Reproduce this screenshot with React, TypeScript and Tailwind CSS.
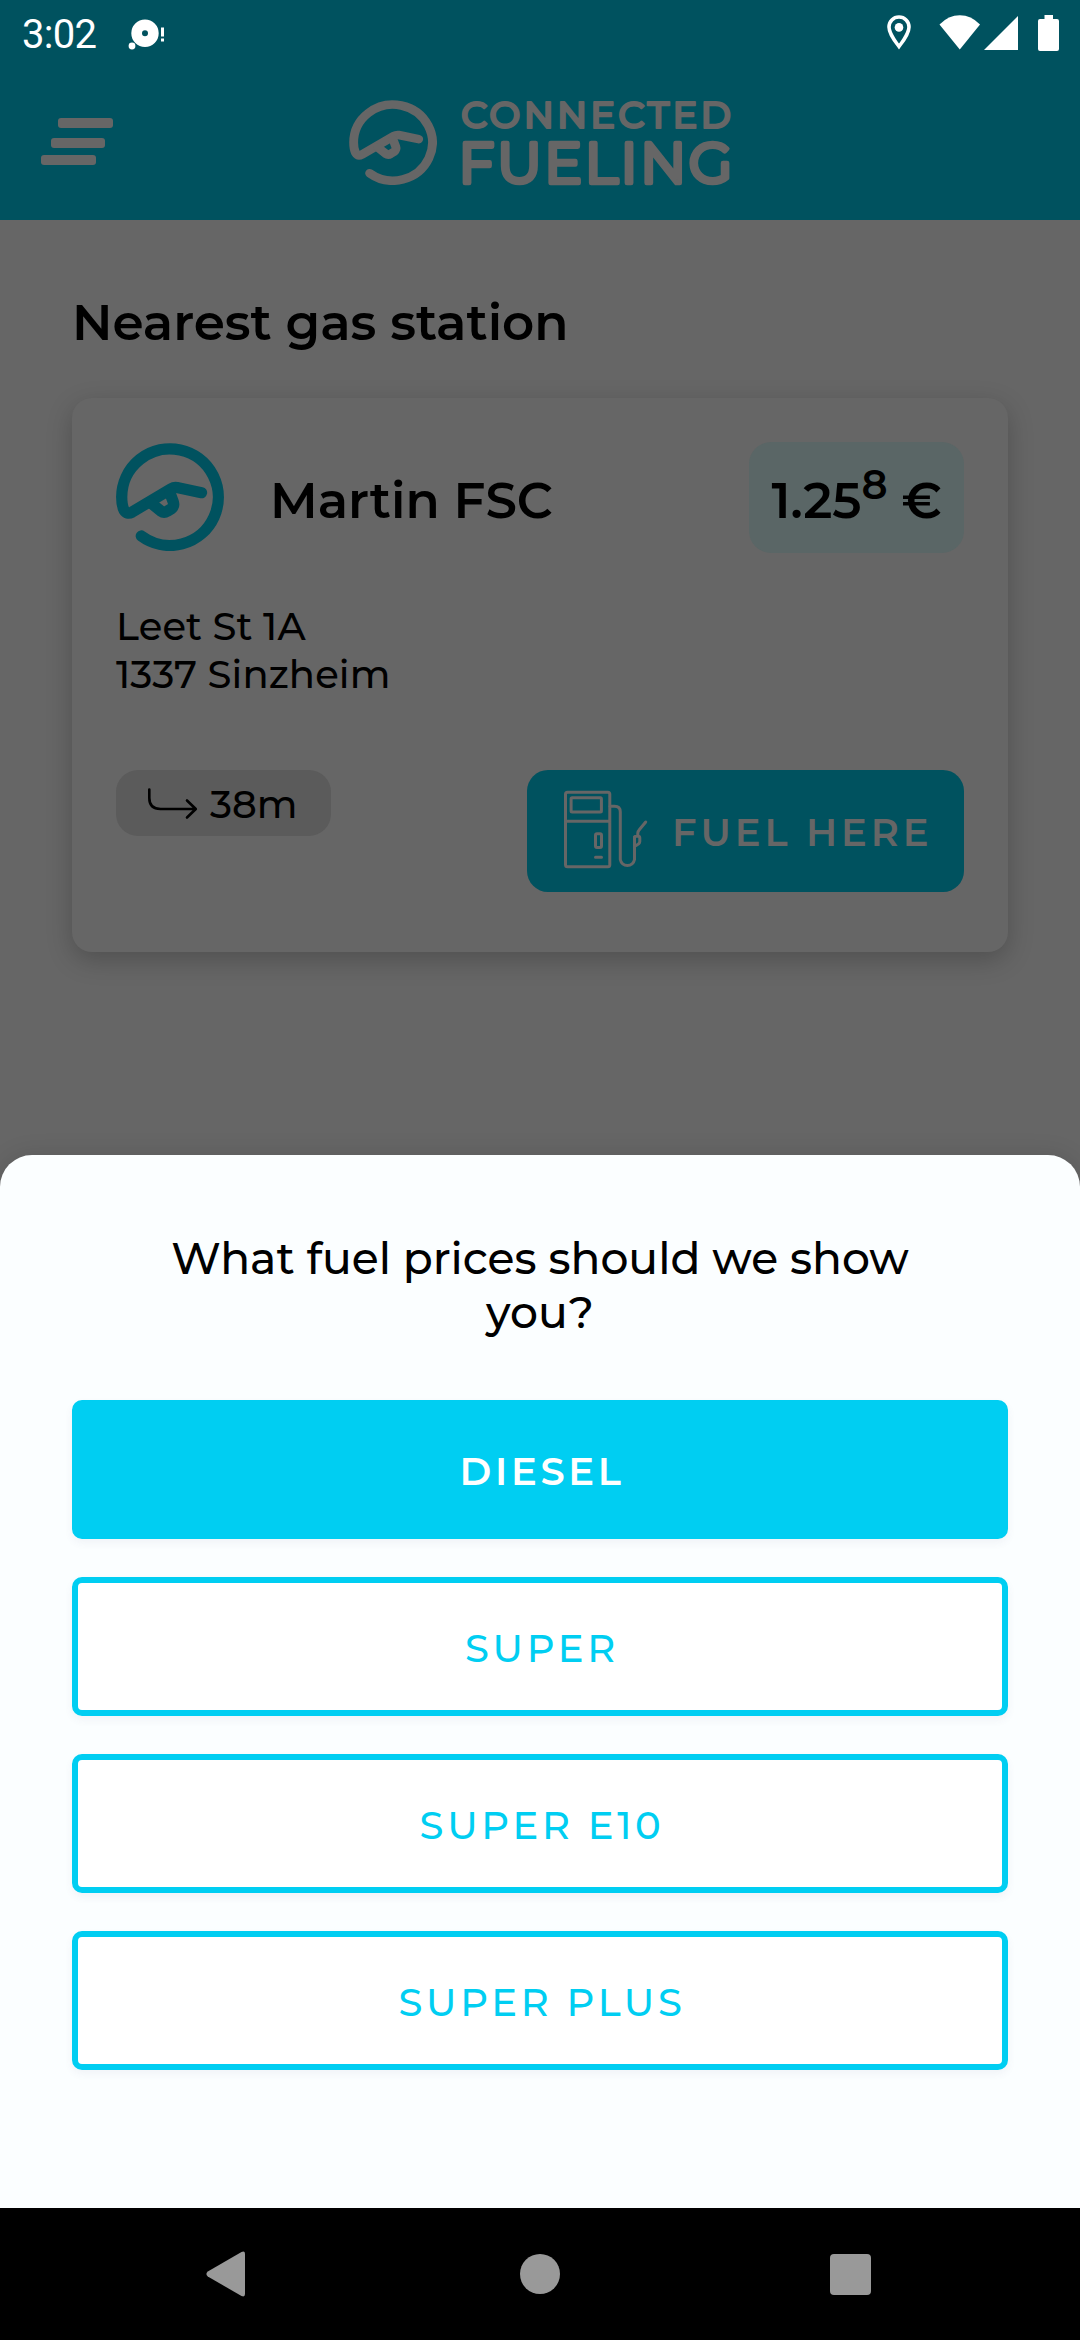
import clsx from "clsx";

function BrandMark({ className, stroke }: { className: string; stroke: number }) {
  return (
    <svg
      viewBox="0 0 108 108"
      preserveAspectRatio="none"
      fill="none"
      stroke="currentColor"
      strokeWidth={stroke}
      strokeLinecap="round"
      strokeLinejoin="round"
      className={className}
    >
      <path d="M25.3 93A48.3 48.3 0 1 0 5.7 54C5.7 60 6.5 64 8 67Q11 72 16 69.2L55 45.8Q58 44 61 44.5L85.5 49.7" />
      <path d="M35 60L45 68.2Q48 70.4 51 68.4L55.5 65.6Q58.6 63 57.3 59L54 50" />
    </svg>
  );
}

function StatusBar() {
  return (
    <div className="flex h-[69px] items-center justify-between pr-[21px] pl-[22px] text-white">
      <div className="flex items-center">
        <span className="w-[106px] font-['Roboto',sans-serif] text-[40px] leading-none tracking-[-0.7px]">3:02</span>
        <svg viewBox="0 0 38 32" className="h-8 w-[38px]" fill="currentColor">
          <path
            fillRule="evenodd"
            d="M17 0.5a13.7 13.7 0 1 1 0 27.4a13.7 13.7 0 1 1 0-27.4M17 11.3a3 3 0 1 0 0 6a3 3 0 1 0 0-6"
          />
          <circle cx="4" cy="27" r="3.4" />
          <path d="M33 8.5h3v9h-3zM33 19.5h3v3h-3z" />
        </svg>
      </div>
      <div className="flex items-center">
        <svg viewBox="0 0 24 35" className="mt-[-4px] mr-7 h-[35px] w-6">
          <path d="M12 2C6.300 2 2 6.400 2 12C2 19 12 31.500 12 31.500S22 19 22 12C22 6.400 17.700 2 12 2Z" fill="none" stroke="currentColor" strokeWidth="3.600" />
          <circle cx="12" cy="12.400" r="4.300" fill="currentColor" />
        </svg>
        <svg viewBox="0 0 42 35" className="mt-[-4px] mr-[3px] h-[35px] w-[42px]" fill="currentColor">
          <path d="M0.500 9.500Q9.500 0.300 20.800 0.300T41 9.500L20.800 34.500Z" />
        </svg>
        <svg viewBox="0 0 34 34" className="mt-[-3px] mr-5 h-[34px] w-[34px]" fill="currentColor">
          <path d="M34 0V34H0Z" />
        </svg>
        <svg viewBox="0 0 21 36" className="mt-[-3px] h-9 w-[21px]" fill="currentColor">
          <path d="M6.500 0h8.500v4h4q2 0 2 2v28q0 2-2 2h-17q-2 0-2-2v-28q0-2 2-2h4.500z" />
        </svg>
      </div>
    </div>
  );
}

function Header() {
  return (
    <header className="h-[220px] bg-[#00525f]">
      <StatusBar />
      <div className="flex items-start pt-[31px] pl-[41px] text-[#666666]">
        <button aria-label="Menu" className="mt-[18px] w-[308px]">
          <span className="ml-[17px] block h-2.5 w-[55px] rounded-[3px] bg-current" />
          <span className="mt-2.5 ml-2.5 block h-2.5 w-[54px] rounded-[3px] bg-current" />
          <span className="mt-[7px] block h-2.5 w-[55px] rounded-[3px] bg-current" />
        </button>
        <BrandMark className="h-[85px] w-[88px]" stroke={10.9} />
        <svg
          viewBox="0 0 270 86"
          className="ml-[24px] h-[86px] w-[270px] overflow-visible font-['Montserrat','Inter',sans-serif]"
          fill="currentColor"
          stroke="currentColor"
          strokeLinejoin="round"
        >
          <text x="0" y="28" fontSize="37" fontWeight="500" strokeWidth="2.200" textLength="270" lengthAdjust="spacing">
            CONNECTED
          </text>
          <text x="-2.500" y="82.500" fontSize="56.500" fontWeight="400" strokeWidth="4.600" textLength="274" lengthAdjust="spacing">
            FUELING
          </text>
        </svg>
      </div>
    </header>
  );
}

function PumpIcon() {
  return (
    <svg viewBox="0 0 84 80" className="mt-[-2px] h-20 w-[84px]" fill="none" stroke="currentColor" strokeWidth="3" strokeLinecap="round" strokeLinejoin="round">
      <rect x="1.500" y="2.200" width="44.300" height="74.500" rx="2" />
      <path d="M2 31.300h43.500M31.500 67.200h6" />
      <rect x="7.100" y="7.800" width="30.300" height="14.300" rx="1" />
      <rect x="31.500" y="43.700" width="6" height="13.800" rx="1.500" />
      <path d="M46 16.300h4.500Q56.300 16.300 56.300 22V69.500a7.200 7.200 0 0 0 14.200 0V47" />
      <path d="M70.500 56V48Q70.500 46.200 72.300 46.200H74Q75.800 46.200 75.800 48V51.500Q75.800 54 71 56M73.800 45.500V43Q73.800 41.500 75.500 39.500L81.700 32" />
    </svg>
  );
}

function StationCard() {
  return (
    <section className="mt-[45px] rounded-[20px] bg-[#666666] px-11 pt-11 pb-[60px] shadow-[0_8px_26px_rgba(0,0,0,0.22)]">
      <div className="flex h-[111px] items-center">
        <BrandMark className="mt-[-2px] h-[108px] w-[108px] text-[#00525f]" stroke={11.3} />
        <h2 className="ml-[46px] flex-1 pt-[6px] text-[50px] leading-[60px] font-semibold">Martin FSC</h2>
        <div className="flex h-full w-[215px] items-center justify-center rounded-[22px] bg-[#5a6666] pt-[6px] text-[50px] leading-[60px] font-semibold">
          <p>
            1.25<span className="align-[19px] text-[40px] leading-[0]">8</span> €
          </p>
        </div>
      </div>
      <address className="mt-[50px] text-[38.5px] leading-[48px] font-medium tracking-[0.1px] not-italic">
        Leet St 1A
        <br />
        1337 Sinzheim
      </address>
      <div className="mt-[71px] flex items-start justify-between">
        <div className="flex h-[66px] w-[215px] items-center rounded-[22px] bg-[#5b5b5b] pl-8">
          <svg viewBox="0 0 50 32" className="mt-0.5 h-8 w-[50px]" fill="none" stroke="currentColor" strokeWidth="2.600" strokeLinecap="round" strokeLinejoin="round">
            <path d="M1.300 1.500V10Q1.300 21 12.500 21H47.500M39 12.500L47.800 21L39 29.500" />
          </svg>
          <span className="ml-3 pt-[4px] text-[38.5px] leading-[48px] font-medium">38m</span>
        </div>
        <button className="flex h-[122px] w-[437px] items-center rounded-[21px] bg-[#00525f] pl-[37px] text-[#666666]">
          <PumpIcon />
          <span className="ml-6 pt-[3px] text-[38.5px] font-semibold tracking-[3.9px]">FUEL HERE</span>
        </button>
      </div>
    </section>
  );
}

const fuels = [
  { name: "DIESEL", selected: true },
  { name: "SUPER", selected: false },
  { name: "SUPER E10", selected: false },
  { name: "SUPER PLUS", selected: false },
];

function FuelSheet() {
  return (
    <section className="h-[1053px] rounded-t-[32px] bg-[#fbfeff] px-[72px] pt-[76px] shadow-[0_0_24px_rgba(0,0,0,0.12)]">
      <p className="px-20 text-center text-[44px] leading-[54px] font-medium">What fuel prices should we show you?</p>
      <div className="mt-[61px] flex flex-col gap-[38px]">
        {fuels.map((fuel) => (
          <button
            key={fuel.name}
            className={clsx(
              "h-[139px] rounded-[10px] border-[6px] border-[#00cef2] pt-1 pl-1 text-[38.5px] tracking-[3.7px] shadow-[0_4px_8px_rgba(60,60,120,0.06)]",
              fuel.selected ? "bg-[#00cef2] font-semibold text-white" : "bg-white font-medium text-[#00cef2]",
            )}
          >
            {fuel.name}
          </button>
        ))}
      </div>
    </section>
  );
}

function NavigationBar() {
  return (
    <nav className="grid h-[132px] grid-cols-[1fr_40px_1fr] items-center bg-black pr-[209px] pl-[206px] text-[#999999]">
      <svg viewBox="0 0 40 46" className="h-[46px] w-10" fill="currentColor">
        <path d="M35.500 1Q39 -0.500 39 3V43Q39 46.500 35.500 45L1.800 25.500Q-1 23 1.800 20.500Z" />
      </svg>
      <span className="ml-[1.5px] h-10 w-10 rounded-full bg-current" />
      <span className="h-[41px] w-[41px] justify-self-end rounded bg-current" />
    </nav>
  );
}

export default function App() {
  return (
    <div className="flex h-[2340px] w-[1080px] flex-col overflow-hidden bg-[#666666] font-['Montserrat','Inter',sans-serif] text-black">
      <Header />
      <main className="h-[935px] px-[72px] pt-[73px]">
        <h1 className="text-[50px] leading-[60px] font-semibold">Nearest gas station</h1>
        <StationCard />
      </main>
      <FuelSheet />
      <NavigationBar />
    </div>
  );
}
